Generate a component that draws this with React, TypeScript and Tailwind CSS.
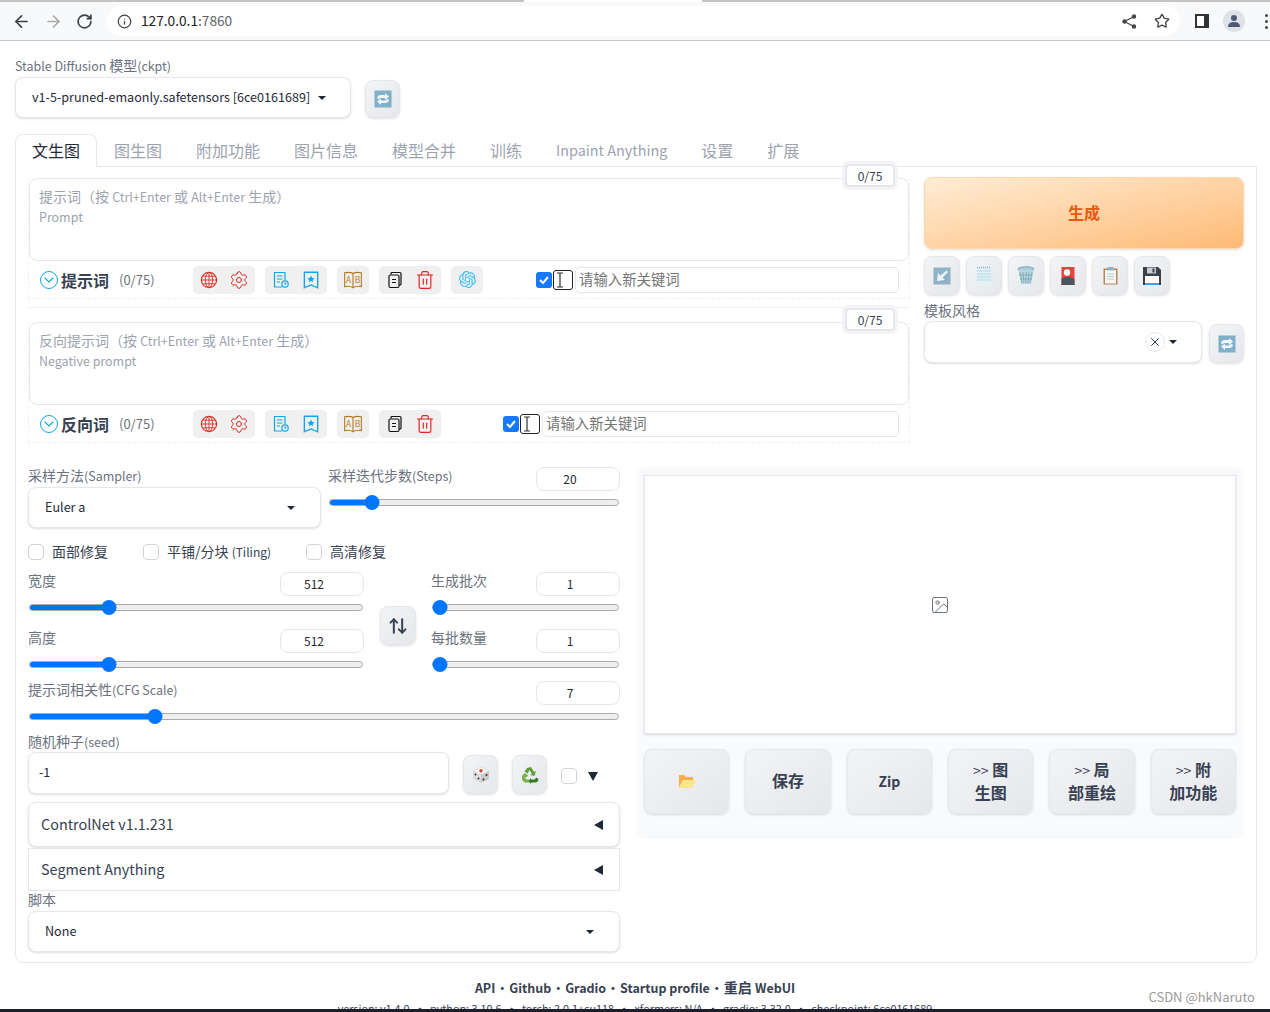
import React from 'react';
import { ArrowLeft, ArrowRight, RotateCw, Info, Star, Settings, Trash2, ChevronDown, X, ArrowUpDown, Image as ImageIcon } from 'lucide-react';
import { SiOpenai } from 'react-icons/si';

const btn = 'flex items-center justify-center rounded-lg border border-[#e5e7eb] bg-gradient-to-br from-[#f3f4f6] to-[#e5e7eb] shadow-sm';

// latin glyphs run narrower than the CJK ones in the reference
const L = ({ children }: { children: React.ReactNode }) => <span className="text-[0.89em]">{children}</span>;

const RefreshEmoji = () => (
    <svg width="18" height="18" viewBox="0 0 18 18">
        <rect x="0.5" y="0.5" width="17" height="17" fill="#7fb0c9" />
        <path d="M3 8 Q3.5 5 7 5 H11 V3 L15 6.5 L11 10 V8 H7 Q5 8 5 9.5 Z" fill="#f0f6f9" />
        <path d="M15 10 Q14.5 13 11 13 H7 V15 L3 11.5 L7 8.5 V10.5 H11 Q13 10.5 13 8.5 Z" fill="#f0f6f9" />
    </svg>
);

const ArrowEmoji = () => (
    <svg width="18" height="18" viewBox="0 0 18 18">
        <rect x="0.5" y="0.5" width="17" height="17" fill="#8fb3c6" />
        <path d="M13.5 3.5 L15 5 L9.5 10.5 L12 13 L4 14 L5 6 L7.5 8.5 Z" fill="#eef5f8" />
    </svg>
);

const NoteEmoji = () => (
    <svg width="16" height="19" viewBox="0 0 16 19">
        <rect x="0.5" y="1" width="15" height="17.5" fill="#e3f1f7" />
        <path d="M1 5h14M1 8h14M1 11h14M1 14h14" stroke="#b5d9e8" strokeWidth="1" />
        <path d="M1 1.5h14" stroke="#9ab" strokeWidth="1.6" strokeDasharray="1 1" />
    </svg>
);

const BinEmoji = () => (
    <svg width="18" height="19" viewBox="0 0 18 19">
        <ellipse cx="9" cy="3" rx="8" ry="2.2" fill="#a9cdd8" stroke="#7ea8b8" />
        <path d="M1.5 4 L4 18 H14 L16.5 4 Z" fill="#b8d6df" />
        <path d="M3 6 L5 17M6 6 L7 17M9 6V17M12 6L11 17M15 6L13 17M2 9H16M3 13H15" stroke="#6f9fb0" strokeWidth="0.7" />
    </svg>
);

const CardEmoji = () => (
    <svg width="14" height="18" viewBox="0 0 14 18">
        <rect width="13" height="18" x="0.5" fill="#e8433f" />
        <circle cx="6" cy="5.5" r="3.2" fill="#fff" />
        <path d="M0.5 18 V11.5 Q7 8.5 13.5 12 V18 Z" fill="#4f5560" />
    </svg>
);

const ClipEmoji = () => (
    <svg width="15" height="18" viewBox="0 0 15 18">
        <rect x="0.5" y="1.5" width="14" height="16" fill="#b98559" />
        <rect x="2" y="3" width="11" height="13.5" fill="#f7f7f2" />
        <rect x="4.5" y="0" width="6" height="3.5" fill="#8fb3c6" />
        <path d="M4 7h7M4 9.5h7M4 12h7" stroke="#bcd" strokeWidth="1" />
    </svg>
);

const SaveEmoji = () => (
    <svg width="18" height="18" viewBox="0 0 18 18">
        <path d="M0 0 H15 L18 3 V18 H0 Z" fill="#3c4048" />
        <rect x="4" y="0.5" width="9" height="6" fill="#c9cdd2" />
        <rect x="9.5" y="1.5" width="2" height="4" fill="#3c4048" />
        <rect x="2" y="9" width="14" height="9" fill="#fff" />
        <rect x="2" y="16" width="14" height="2" fill="#3f9fe0" />
    </svg>
);

const FolderEmoji = () => (
    <svg width="18" height="16" viewBox="0 0 18 16">
        <path d="M1 15 V2 H6 L8 4 H15 V7 H5 Z" fill="#f6ad4b" />
        <path d="M1 15 L5 7 H18 L14 15 Z" fill="#fde58a" />
    </svg>
);

const DiceEmoji = () => (
    <svg width="18" height="18" viewBox="0 0 18 18">
        <path d="M9 1 L17 5 L9 9 L1 5 Z" fill="#f5f5f5" stroke="#bbb" strokeWidth="0.4" />
        <path d="M1 5 L9 9 V17 L1 13 Z" fill="#ddd" />
        <path d="M17 5 L9 9 V17 L17 13 Z" fill="#c9c9c9" />
        <circle cx="9" cy="4.8" r="1.7" fill="#e0452c" />
        <circle cx="3.5" cy="8.5" r="1" fill="#333" />
        <circle cx="6.5" cy="12.5" r="1" fill="#333" />
        <circle cx="11.5" cy="13.5" r="1" fill="#333" />
        <circle cx="14.5" cy="9" r="1" fill="#333" />
    </svg>
);

const RecycleEmoji = () => (
    <svg width="18" height="18" viewBox="0 0 18 18">
        <path d="M6 2 L10 1 L13 6 L15 5 L13.5 10 L9 9 L11 8 L8.5 4 L6.5 7.5 L3.5 5.5 Z" fill="#5d9e3a" />
        <path d="M1 10 L3.5 7 L7 9 L6 11 L4 11 L5.5 13.5 H8 V16.5 H4 Q1.5 16 1 13 Z" fill="#78b24e" />
        <path d="M10 13.5 H14 L15 11.5 L17.5 13 Q17 16.5 14 16.5 H10 V18 L7.5 15 L10 12 Z" fill="#2f7a22" />
    </svg>
);

const GlobeIcon = () => (
    <svg width="20" height="20" viewBox="0 0 20 20" fill="none" stroke="#d9342b" strokeWidth="0.9">
        <circle cx="10" cy="10" r="7.6" strokeWidth="1.2" />
        <ellipse cx="10" cy="10" rx="3.6" ry="7.6" />
        <path d="M10 2.4 V17.6 M2.4 10 H17.6 M3.5 6.2 H16.5 M3.5 13.8 H16.5" />
    </svg>
);

const FileClockIcon = () => (
    <svg width="20" height="20" viewBox="0 0 20 20" fill="none" stroke="#0ea5e9" strokeWidth="1.2">
        <path d="M11 17 H3.5 V2.5 H14 V10" />
        <path d="M6 6 H11.5 M6 9 H11.5 M6 12 H9" />
        <circle cx="14" cy="14" r="3.2" />
        <path d="M14 12.4 V14 H15.4" />
    </svg>
);

const BookmarkIcon = () => (
    <svg width="20" height="20" viewBox="0 0 18 18" fill="none" stroke="#0ea5e9" strokeWidth="1.2">
        <path d="M3 2 H15 V16 L9 13.5 L3 16 Z" />
        <path d="M9 5 L10 7.3 L12.3 7.5 L10.5 9 L11 11 L9 10 L7 11 L7.5 9 L5.7 7.5 L8 7.3 Z" fill="#0ea5e9" stroke="none" />
    </svg>
);

const BookIcon = () => (
    <svg width="20" height="20" viewBox="0 0 18 18" fill="none" stroke="#b7791f" strokeWidth="1">
        <path d="M9 3 Q6 1.5 1.5 2.5 V15 Q6 14 9 16 Q12 14 16.5 15 V2.5 Q12 1.5 9 3 Z" />
        <path d="M9 3 V16" />
        <text x="5" y="12" fontSize="7.5" fill="#b7791f" stroke="none" textAnchor="middle">A</text>
        <text x="13" y="12" fontSize="7.5" fill="#b7791f" stroke="none" textAnchor="middle">B</text>
    </svg>
);

const CopyIcon = () => (
    <svg width="20" height="20" viewBox="0 0 20 20" fill="none" stroke="#111" strokeWidth="1.2">
        <path d="M6 4.5 V3.5 Q6 2.5 7 2.5 H15 Q16 2.5 16 3.5 V14 Q16 15 15 15 H14" />
        <rect x="4" y="5" width="10" height="12.5" rx="1.5" fill="#f0f0f0" />
        <path d="M7 9.5 H11 M7 12.5 H11" />
    </svg>
);

const ShareIcon = () => (
    <svg width="15" height="15" viewBox="0 0 15 15" fill="#444" stroke="#444" strokeWidth="1.2">
        <circle cx="12" cy="2.5" r="1.6" />
        <circle cx="2.5" cy="7.5" r="1.6" />
        <circle cx="12" cy="12.5" r="1.6" />
        <path d="M12 2.5 L2.5 7.5 L12 12.5" fill="none" />
    </svg>
);

const IBeam = () => (
    <div className="flex h-[20px] w-[20px] items-center justify-center rounded-[3px] border border-[#222] bg-white">
        <svg width="8" height="16" viewBox="0 0 8 16" fill="none" stroke="#333" strokeWidth="1.2" className="-ml-[6px]">
            <path d="M1 1 H7 M4 1 V15 M1 15 H7" />
        </svg>
    </div>
);

const Caret = () => <div className="h-0 w-0 border-x-[4px] border-t-[4px] border-x-transparent border-t-[#1f2937]" />;

const Check = ({ children }: { children: React.ReactNode }) => (
    <label className="flex items-center gap-2 text-sm text-[#374151]">
        <span className="h-4 w-4 rounded-[4px] border border-[#d1d5db] bg-white" />
        <span className="-mt-[2px]">{children}</span>
    </label>
);

const Slider = ({ pct }: { pct: number }) => (
    <div className="relative mx-px h-[7px] rounded-full border border-[#aaa] bg-[#eee]">
        <div className="h-full rounded-full bg-[#0075ff]" style={{ width: `${pct}%` }} />
        <div className="absolute top-[-5px] h-[15px] w-[15px] -translate-x-1/2 rounded-full bg-[#0075ff]" style={{ left: `${pct}%`, marginLeft: pct < 3 ? 7 : 0 }} />
    </div>
);

const Num = ({ value }: { value: string }) => (
    <div className="flex h-6 w-[84px] items-center justify-center rounded-lg border border-[#e5e7eb] bg-white pr-[16px] text-xs text-[#1f2937]">{value}</div>
);

const SliderBlock = ({ label, value, pct, className = '' }: { label: React.ReactNode; value: string; pct: number; className?: string }) => (
    <div className={className}>
        <div className="flex items-start justify-between">
            <span className="text-sm leading-[16px] text-[#6b7280]">{label}</span>
            <Num value={value} />
        </div>
        <div className="mt-[8px]"><Slider pct={pct} /></div>
    </div>
);

const Counter = () => (
    <div className="absolute right-[13px] top-[-15px] flex h-[23px] w-[50px] items-center justify-center rounded-[4px] border-2 border-[#e5e7eb] bg-white text-xs text-[#374151] shadow-[0_0_0_3px_#f3f4f6]">0/75</div>
);

const IconGroup = ({ children }: { children: React.ReactNode }) => (
    <div className="flex h-[28px] items-center justify-center gap-[10px] rounded-[5px] border border-[#eee] bg-[#f0f0f0] px-[5px]">{children}</div>
);

const PromptBlock = ({ hint, en, title, openai, keywordGap }: { hint: React.ReactNode; en: string; title: string; openai?: boolean; keywordGap: string }) => (
    <div className="border-x border-b border-dashed border-[#f0f0f0]">
        <div className="relative h-[83px] rounded-lg border border-[#e5e7eb] bg-white px-[9px] py-[7px] text-sm leading-[20px] text-[#9ca3af]">
            <Counter />
            <div>{hint}</div>
            <div className="-mt-px"><L>{en}</L></div>
        </div>
        <div className="flex h-[37px] items-center pl-[11px] pr-[10px]">
            <div className="flex w-[153px] items-center">
                <ChevronDown size={18} strokeWidth={1.6} className="rounded-full border-[1.5px] border-[#0ea5e9] text-[#0ea5e9]" />
                <span className="ml-[3px] text-base font-bold text-[#374151]">{title}</span>
                <span className="ml-[10px] text-[13px] text-[#6b7280]">(0/75)</span>
            </div>
            <div className="flex gap-[10px]">
                <IconGroup>
                    <GlobeIcon />
                    <Settings size={20} strokeWidth={1.2} className="text-[#dc2626]" />
                </IconGroup>
                <IconGroup>
                    <FileClockIcon />
                    <BookmarkIcon />
                </IconGroup>
                <IconGroup><BookIcon /></IconGroup>
                <IconGroup>
                    <CopyIcon />
                    <Trash2 size={20} strokeWidth={1.4} className="text-[#dc2626]" />
                </IconGroup>
                {openai && <IconGroup><div className="flex h-5 w-5 items-center justify-center"><SiOpenai size={17} className="text-[#38bdf8]" /></div></IconGroup>}
            </div>
            <div className={`ml-auto flex items-center ${keywordGap}`}>
                <div className="flex h-4 w-4 items-center justify-center rounded-[3px] bg-[#1677ff]">
                    <svg width="10" height="8" viewBox="0 0 10 8" fill="none" stroke="#fff" strokeWidth="2"><path d="M1 4 L4 7 L9 1" /></svg>
                </div>
                <div className="ml-[1px]"><IBeam /></div>
                <div className="ml-[2px] flex h-[26px] flex-1 items-center rounded-[5px] border border-[#e5e7eb] bg-white px-[3px] pb-[2px] text-[14.4px] text-[#757575]">请输入新关键词</div>
            </div>
        </div>
    </div>
);

const Select = ({ value, className = '' }: { value: string; className?: string }) => (
    <div className={`flex items-center justify-between rounded-lg border border-[#e5e7eb] bg-white pl-4 pr-[25px] text-[12.6px] text-[#1f2937] shadow-sm ${className}`}>
        <span>{value}</span>
        <Caret />
    </div>
);

const Accordion = ({ title, className = '' }: { title: string; className?: string }) => (
    <div className={`flex items-center justify-between border border-[#e5e7eb] bg-white pl-3 pr-4 text-[14.4px] text-[#374151] ${className}`}>
        <span className="-mt-[2px]">{title}</span>
        <div className="h-0 w-0 border-y-[5px] border-r-[9px] border-y-transparent border-r-[#1f2937]" />
    </div>
);

const OutButton = ({ children }: { children: React.ReactNode }) => (
    <div className={`${btn} h-[65px] flex-1 pb-[2px] text-center text-base font-semibold leading-[23px] text-[#374151]`}><div>{children}</div></div>
);

const Browser = () => (
    <div className="h-[41px] border-b border-[#c8c8c8] bg-[#f8f9fa]">
        <div className="flex h-[2px]">
            <div className="w-[524px] bg-[#c4c4c4]" />
            <div className="w-[178px] bg-white" />
            <div className="flex-1 bg-[#c4c4c4]" />
        </div>
        <div className="flex h-[38px] items-center pl-[12px]">
            <ArrowLeft size={19} strokeWidth={2.2} className="text-[#3c4043]" />
            <ArrowRight size={19} strokeWidth={2} className="ml-[13px] text-[#a8a8a8]" />
            <RotateCw size={17} strokeWidth={2.4} className="ml-[13px] text-[#3c4043]" />
            <div className="ml-[14px] flex h-[30px] w-[1073px] shrink-0 items-center rounded-full bg-white pl-[10px] pr-[10px]">
                <Info size={15} className="text-[#444]" />
                <span className="ml-[9px] pb-px text-[13.7px] text-[#202124]">127.0.0.1<span className="text-[#5f6368]">:7860</span></span>
                <div className="ml-auto"><ShareIcon /></div>
                <Star size={16} strokeWidth={2} className="ml-[17px] text-[#444]" />
            </div>
            <div className="ml-[15px] h-[14px] w-[14px] shrink-0 border-y-2 border-l-2 border-r-[5px] border-[#333] bg-white" />
            <div className="ml-[14px] flex h-[22px] w-[22px] shrink-0 items-center justify-center rounded-full bg-[#dee1e6]">
                <svg width="14" height="14" viewBox="0 0 14 14" fill="#4f5b76"><circle cx="7" cy="4" r="3" /><path d="M1 13 Q1 8 7 8 Q13 8 13 13 Z" /></svg>
            </div>
            <div className="ml-[20px] flex shrink-0 flex-col gap-[3px]">
                <span className="h-[3px] w-[3px] rounded-full bg-[#444]" />
                <span className="h-[3px] w-[3px] rounded-full bg-[#444]" />
                <span className="h-[3px] w-[3px] rounded-full bg-[#444]" />
            </div>
        </div>
    </div>
);

const tabs: React.ReactNode[] = ['图生图', '附加功能', '图片信息', '模型合并', '训练', <span className="text-[14.4px]">Inpaint Anything</span>, '设置', '扩展'];

const Dot = () => <span className="inline-block w-[14px] text-center font-normal">•</span>;

export default function App() {
    return (
        <div className="relative h-[1012px] overflow-hidden bg-white font-['Noto_Sans_CJK_SC','Noto_Sans',sans-serif] text-[#1f2937]">
            <Browser />
            <main className="pl-[15px]">
                <div className="mt-[15px] h-[20px] text-sm leading-[18px] text-[#6b7280]"><L>Stable Diffusion </L>模型<L>(ckpt)</L></div>
                <div className="mt-[1px] flex items-end gap-[14px]">
                    <div className="flex h-[41px] w-[336px] items-center gap-2 rounded-lg border border-[#e5e7eb] bg-white pl-4 text-[12.6px] shadow-sm">
                        v1-5-pruned-emaonly.safetensors [6ce0161689]
                        <Caret />
                    </div>
                    <div className={`${btn} h-[38px] w-[35px]`}><RefreshEmoji /></div>
                </div>

                <div className="mt-[15px] flex h-[33px] items-end">
                    <div className="relative z-10 -mb-px flex h-[33px] w-[82px] items-center justify-center rounded-t-lg border border-b-0 border-[#e5e7eb] bg-white pb-[2px] text-base text-[#1f2937]">文生图</div>
                    {tabs.map((t, i) => (
                        <div key={i} className="flex h-[33px] items-center px-[17px] text-base text-[#9ca3af]">{t}</div>
                    ))}
                </div>

                <section className="h-[797px] w-[1242px] rounded-b-lg border border-[#e5e7eb] px-3">
                    <div className="flex gap-[14px]">
                        <div className="w-[882px] shrink-0 pt-[11px]">
                            <PromptBlock hint={<>提示词（按 <L>Ctrl+Enter</L> 或 <L>Alt+Enter</L> 生成）</>} en="Prompt" title="提示词" openai keywordGap="w-[363px]" />
                            <div className="mt-[8px] border-t border-[#f0f0f0] pt-[14px]">
                                <PromptBlock hint={<>反向提示词（按 <L>Ctrl+Enter</L> 或 <L>Alt+Enter</L> 生成）</>} en="Negative prompt" title="反向词" keywordGap="w-[396px]" />
                            </div>
                        </div>
                        <div className="w-[320px] shrink-0 pt-[10px]">
                            <div className="flex h-[72px] items-center justify-center rounded-lg border border-[#fed7aa] bg-gradient-to-br from-[#ffedd5] to-[#fdba74] pb-[2px] text-base font-bold text-[#ea580c] shadow-sm">生成</div>
                            <div className="mt-[7px] flex gap-[6px]">
                                {[<ArrowEmoji />, <NoteEmoji />, <BinEmoji />, <CardEmoji />, <ClipEmoji />, <SaveEmoji />].map((icon, i) => (
                                    <div key={i} className={`${btn} h-[39px] w-[36px]`}>{icon}</div>
                                ))}
                            </div>
                            <div className="mt-[6px] h-[20px] text-sm leading-[18px] text-[#6b7280]">模板风格</div>
                            <div className="flex items-end justify-between">
                                <div className="flex h-[42px] w-[278px] items-center justify-end rounded-lg border border-[#e5e7eb] bg-white pr-[24px] shadow-sm">
                                    <div className="mr-[4px] flex h-5 w-5 items-center justify-center rounded-full border border-[#e5e7eb]"><X size={14} strokeWidth={1.6} /></div>
                                    <Caret />
                                </div>
                                <div className={`${btn} h-[39px] w-[35px]`}><RefreshEmoji /></div>
                            </div>
                        </div>
                    </div>

                    <div className="mt-[24px] flex gap-4">
                        <div className="w-[592px] shrink-0">
                            <div className="flex gap-[7px]">
                                <div className="w-[293px]">
                                    <div className="h-[20px] text-sm leading-[16px] text-[#6b7280]">采样方法<L>(Sampler)</L></div>
                                    <Select value="Euler a" className="h-[41px]" />
                                </div>
                                <div className="w-[292px]">
                                    <SliderBlock label={<>采样迭代步数<L>(Steps)</L></>} value="20" pct={14.5} />
                                </div>
                            </div>
                            <div className="mt-[14px] flex h-[20px] gap-[35px]">
                                <Check>面部修复</Check>
                                <Check>平铺/分块 <span className="text-xs">(Tiling)</span></Check>
                                <Check>高清修复</Check>
                            </div>
                            <div className="mt-[10px] flex">
                                <div className="w-[336px] shrink-0">
                                    <SliderBlock label="宽度" value="512" pct={23.7} />
                                    <SliderBlock label="高度" value="512" pct={23.7} className="mt-[18px]" />
                                </div>
                                <div className={`${btn} ml-[16px] mt-[34px] h-[39px] w-[36px] shrink-0`}><ArrowUpDown size={20} strokeWidth={2.4} className="text-[#374151]" /></div>
                                <div className="ml-[15px] flex-1">
                                    <SliderBlock label="生成批次" value="1" pct={0} />
                                    <SliderBlock label="每批数量" value="1" pct={0} className="mt-[18px]" />
                                </div>
                            </div>
                            <SliderBlock label={<>提示词相关性<L>(CFG Scale)</L></>} value="7" pct={21.3} className="mt-[13px]" />
                            <div className="mt-[12px] h-[20px] text-sm leading-[18px] text-[#6b7280]">随机种子<L>(seed)</L></div>
                            <div className="flex items-end">
                                <div className="flex h-[42px] w-[421px] shrink-0 items-center rounded-lg border border-[#e5e7eb] bg-white px-[10px] pb-[2px] text-[12.6px] shadow-sm">-1</div>
                                <div className={`${btn} ml-[14px] h-[39px] w-[35px]`}><DiceEmoji /></div>
                                <div className={`${btn} ml-[14px] h-[39px] w-[35px]`}><RecycleEmoji /></div>
                                <div className="mb-[10px] ml-[14px] h-4 w-4 rounded-[4px] border border-[#d1d5db] bg-white" />
                                <div className="mb-[13px] ml-[11px] h-0 w-0 border-x-[5px] border-t-[9px] border-x-transparent border-t-[#1f2937]" />
                            </div>
                            <Accordion title="ControlNet v1.1.231" className="mt-[8px] h-[45px] rounded-lg shadow-sm" />
                            <Accordion title="Segment Anything" className="mt-[1px] h-[43px]" />
                            <div className="h-[20px] text-sm leading-[17px] text-[#6b7280]">脚本</div>
                            <Select value="None" className="h-[41px]" />
                        </div>

                        <div className="h-[372px] w-[608px] shrink-0 rounded-lg bg-[#f9fafb] p-2">
                            <div className="flex h-[259px] items-center justify-center border border-[#e5e7eb] bg-white shadow-sm">
                                <ImageIcon size={20} strokeWidth={1.2} className="text-[#6b7280]" />
                            </div>
                            <div className="mt-[15px] flex gap-4">
                                <OutButton><FolderEmoji /></OutButton>
                                <OutButton>保存</OutButton>
                                <OutButton><span className="text-sm">Zip</span></OutButton>
                                <OutButton><span className="text-sm font-normal">&gt;&gt;</span> 图<br />生图</OutButton>
                                <OutButton><span className="text-sm font-normal">&gt;&gt;</span> 局<br />部重绘</OutButton>
                                <OutButton><span className="text-sm font-normal">&gt;&gt;</span> 附<br />加功能</OutButton>
                            </div>
                        </div>
                    </div>
                </section>

                <footer className="mt-[14px] pr-[15px] text-center">
                    <div className="h-[20px] text-sm font-semibold leading-[20px] text-[#374151]">
                        <L>API</L><Dot /><L>Github</L><Dot /><L>Gradio</L><Dot /><L>Startup profile</L><Dot />重启 <L>WebUI</L>
                    </div>
                    <div className="mt-[3px] h-[16px] text-[10.8px] leading-[16px] text-[#374151]">version: v1.4.0&nbsp;&nbsp;•&nbsp;&nbsp;python: 3.10.6&nbsp;&nbsp;•&nbsp;&nbsp;torch: 2.0.1+cu118&nbsp;&nbsp;•&nbsp;&nbsp;xformers: N/A&nbsp;&nbsp;•&nbsp;&nbsp;gradio: 3.32.0&nbsp;&nbsp;•&nbsp;&nbsp;checkpoint: 6ce0161689</div>
                </footer>
            </main>
            <div className="absolute bottom-[6px] right-[15px] text-[13px] text-[#9a9a9a]">CSDN @hkNaruto</div>
            <div className="absolute inset-x-0 bottom-0 h-[3px] bg-[#1d1d2b]" />
        </div>
    );
}
